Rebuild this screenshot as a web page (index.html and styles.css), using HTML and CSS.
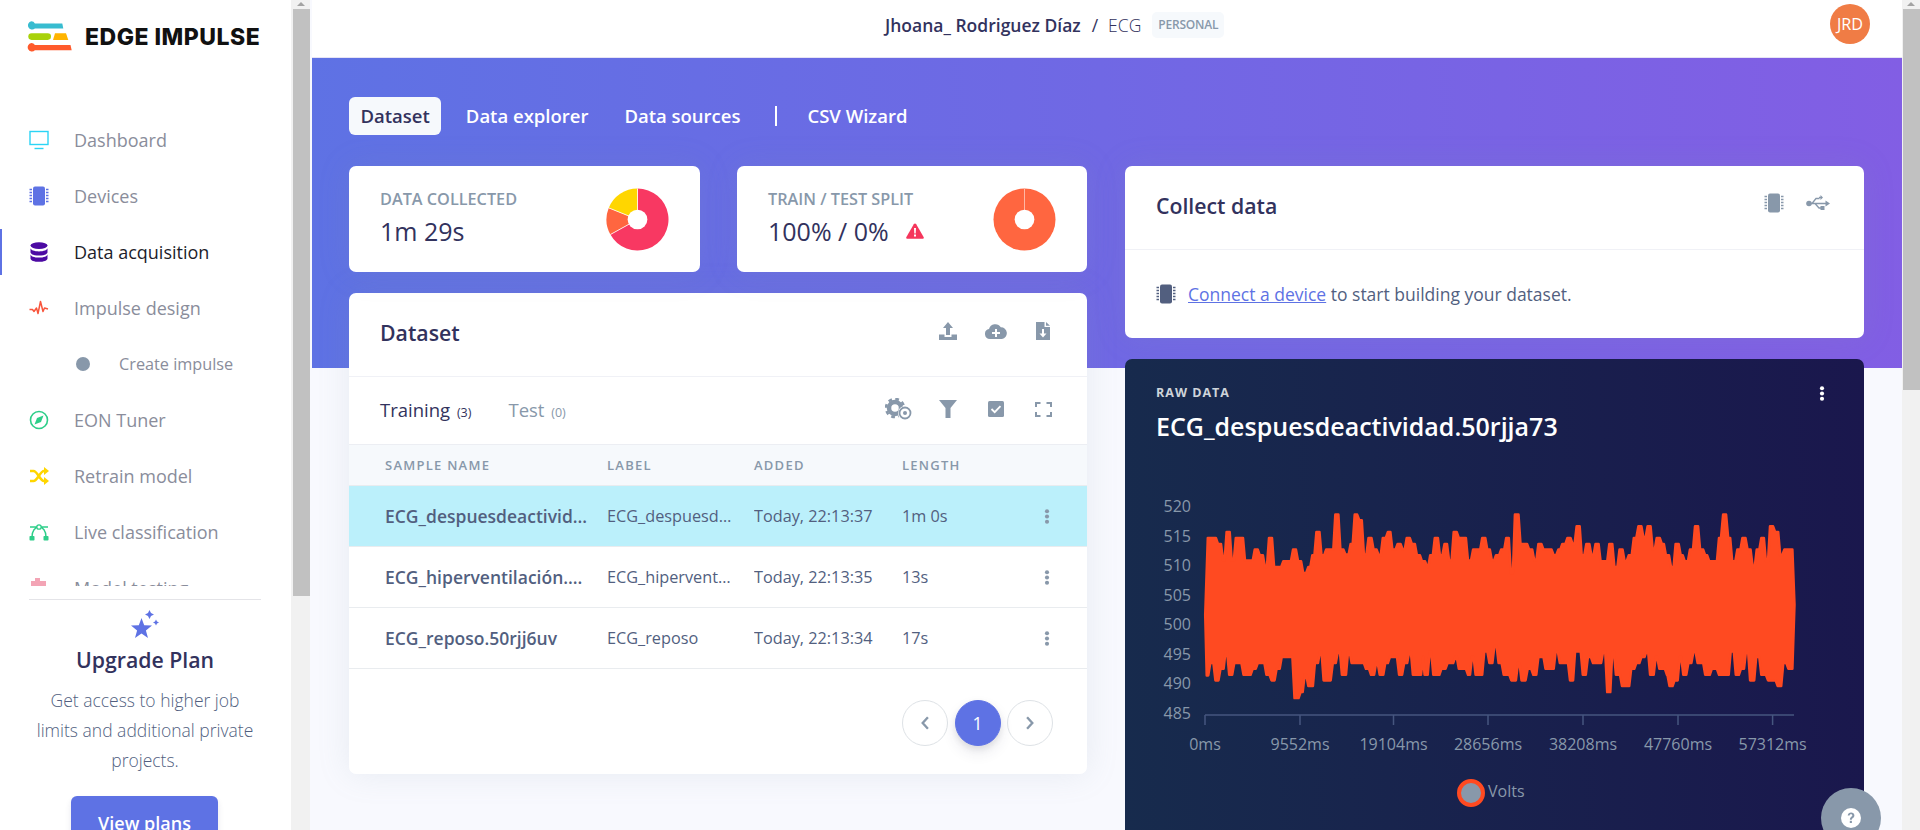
FILE: index.html
```html
<!DOCTYPE html>
<html lang="en">
<head>
    <meta charset="UTF-8">
    <title>ECG - Data acquisition - Edge Impulse</title>
    <link rel="stylesheet" href="styles.css">
</head>
<body>
    <svg class="sprite" xmlns="http://www.w3.org/2000/svg">
        <symbol id="chip" viewBox="0 0 20 20">
            <rect x="4" y="0.5" width="12" height="19" rx="2"/>
            <path d="M0.5 3.5h2.5M0.5 6.5h2.5M0.5 9.5h2.5M0.5 12.5h2.5M0.5 15.5h2.5M17 3.5h2.5M17 6.5h2.5M17 9.5h2.5M17 12.5h2.5M17 15.5h2.5" fill="none" stroke="currentColor" stroke-width="1.3"/>
        </symbol>
        <symbol id="kebab" viewBox="0 0 6 16">
            <circle cx="3" cy="2.4" r="2.2"/>
            <circle cx="3" cy="8" r="2.2"/>
            <circle cx="3" cy="13.6" r="2.2"/>
        </symbol>
    </svg>

    <aside class="sidebar">
        <div class="brand">
            <svg class="brand-mark" viewBox="0 0 45 31">
                <path d="M4.3 0.2a4.2 4.2 0 0 1 3.6 2.3h27.4l1 5H7.9a4.2 4.2 0 1 1-3.6-7.3z" fill="#38bcd0"/>
                <rect x="1.3" y="12.3" width="22.7" height="6.6" rx="3.3" fill="#a8d20a"/>
                <path d="M28 12.3h11l2.3 6.6H26z" fill="#ffb400"/>
                <path d="M4.3 22.1a4.2 4.2 0 0 1 3.6 1.9h35.6l1.2 5.2H7.9a4.2 4.2 0 1 1-3.6-7.1z" fill="#ff5a2c"/>
            </svg>
            <span class="brand-name">EDGE IMPULSE</span>
        </div>
        <nav class="nav">
            <a class="nav-item">
                <svg class="nav-icon c-cyan" viewBox="0 0 20 20"><rect x="1" y="1.5" width="18" height="13" fill="none" stroke="currentColor" stroke-width="1.4"/><path d="M5.5 18.5h9" stroke="currentColor" stroke-width="1.4"/></svg>
                Dashboard
            </a>
            <a class="nav-item">
                <svg class="nav-icon c-blue"><use href="#chip"/></svg>
                Devices
            </a>
            <a class="nav-item active">
                <svg class="nav-icon c-indigo" viewBox="0 0 20 20">
                    <ellipse cx="10" cy="3.6" rx="8.5" ry="3.3"/>
                    <path d="M1.5 6c0 2 3.8 3.4 8.5 3.4s8.500-1.400 8.500-3.400v4.200c0 2-3.800 3.400-8.500 3.400s-8.500-1.400-8.500-3.400z"/>
                    <path d="M1.500 12.200c0 2 3.800 3.400 8.500 3.400s8.500-1.400 8.500-3.400v4.200c0 2-3.800 3.400-8.500 3.400s-8.500-1.400-8.500-3.400z"/>
                </svg>
                Data acquisition
            </a>
            <a class="nav-item">
                <svg class="nav-icon c-red" viewBox="0 0 20 20"><path d="M0.500 11.500h3l1.500 2 2.500-3.500 1.500 5.500 2.500-12 2.500 10 1.500-3.500 3.500 1" fill="none" stroke="currentColor" stroke-width="1.500" stroke-linejoin="round"/></svg>
                Impulse design
            </a>
            <a class="nav-item nav-sub">
                <span class="nav-dot"></span>
                Create impulse
            </a>
            <a class="nav-item">
                <svg class="nav-icon c-green" viewBox="0 0 20 20"><circle cx="10" cy="10" r="8.500" fill="none" stroke="currentColor" stroke-width="1.600"/><path d="M14.500 5.500l-2.500 6.500-6.500 2.500 2.500-6.500z"/></svg>
                EON Tuner
            </a>
            <a class="nav-item">
                <svg class="nav-icon c-yellow" viewBox="0 0 20 20"><path d="M1 5h3.500c4 0 6.500 10 10.500 10h1M1 15h3.500c4 0 6.500-10 10.500-10h1" fill="none" stroke="currentColor" stroke-width="2.600"/><path d="M15 1l5 4-5 4zM15 11l5 4-5 4z"/></svg>
                Retrain model
            </a>
            <a class="nav-item">
                <svg class="nav-icon c-green" viewBox="0 0 20 20"><path d="M3 15C3 9 6 5 10 5s7 4 7 10M1 5h18" fill="none" stroke="currentColor" stroke-width="1.400"/><circle cx="10" cy="5" r="2.200" fill="#fff" stroke="currentColor" stroke-width="1.300"/><rect x="0.500" y="14" width="5" height="4.500" rx="0.800"/><rect x="14.500" y="14" width="5" height="4.500" rx="0.800"/></svg>
                Live classification
            </a>
            <a class="nav-item">
                <svg class="nav-icon c-pink" viewBox="0 0 20 20"><path d="M6 3V0h5v3h6v14H2V3z"/></svg>
                Model testing
            </a>
        </nav>
        <section class="upgrade">
            <svg class="upgrade-star" viewBox="0 0 30 30">
                <polygon points="11.500,8 14.200,15.300 22,15.600 15.900,20.400 18,28 11.500,23.600 5,28 7.100,20.400 1,15.600 8.800,15.300"/>
                <path d="M19.500 0l1.500 3 3 1.500-3 1.500-1.500 3-1.500-3-3-1.500 3-1.500zM26 9.500l1 2 2 1-2 1-1 2-1-2-2-1 2-1z"/>
            </svg>
            <h2 class="upgrade-title">Upgrade Plan</h2>
            <p class="upgrade-text">Get access to higher job limits and additional private projects.</p>
            <button class="upgrade-btn">View plans</button>
        </section>
    </aside>
    <div class="scrollbar scrollbar-side"><span class="scroll-arrow"></span><span class="scroll-thumb thumb-side"></span></div>

    <main class="main">
        <header class="topbar">
            <span class="project-owner">Jhoana_ Rodriguez Díaz</span>
            <span class="project-sep">/</span>
            <span class="project-name">ECG</span>
            <span class="project-badge">PERSONAL</span>
            <span class="avatar">JRD</span>
        </header>

        <div class="page">
            <div class="tabs">
                <a class="tab active">Dataset</a>
                <a class="tab">Data explorer</a>
                <a class="tab">Data sources</a>
                <span class="tab-divider"></span>
                <a class="tab">CSV Wizard</a>
            </div>

            <div class="columns">
                <div class="column">
                    <div class="stats">
                        <div class="card stat">
                            <div>
                                <div class="stat-label">DATA COLLECTED</div>
                                <div class="stat-value">1m 29s</div>
                            </div>
                            <svg class="pie" viewBox="-32 -32 64 64">
                                <path d="M0 -31.500A31.500 31.500 0 1 1 -27.550 15.270L0 0z" fill="#f83862"/>
                                <path d="M-27.550 15.270A31.500 31.500 0 0 1 -29.200 -11.800L0 0z" fill="#ff6640"/>
                                <path d="M-29.200 -11.800A31.500 31.500 0 0 1 0 -31.500L0 0z" fill="#ffd600"/>
                                <path d="M0 -31.500V0L-27.550 15.270M0 0L-29.200 -11.800" fill="none" stroke="#fff" stroke-width="0.800"/>
                                <circle r="10" fill="#fff"/>
                            </svg>
                        </div>
                        <div class="card stat">
                            <div>
                                <div class="stat-label">TRAIN / TEST SPLIT</div>
                                <div class="stat-value">100% / 0%
                                    <svg class="warn" viewBox="0 0 18 16"><path d="M9 0.500c0.500 0 0.900 0.300 1.200 0.700l7.400 12.800c0.500 0.900-0.100 1.700-1.100 1.700H1.500c-1 0-1.600-0.800-1.100-1.700L7.800 1.200C8.100 0.800 8.500 0.500 9 0.500z" fill="#f5365c"/><path d="M8 5h2l-0.300 5.500H8.300zM8 11.600h2v2H8z" fill="#fff"/></svg>
                                </div>
                            </div>
                            <svg class="pie" viewBox="-32 -32 64 64">
                                <circle r="31.500" fill="#ff6640"/>
                                <path d="M0 -31.500V0" stroke="#ffb9a6" stroke-width="1"/>
                                <circle r="10" fill="#fff"/>
                            </svg>
                        </div>
                    </div>

                    <div class="card dataset">
                        <div class="card-head">
                            <h3 class="card-title">Dataset</h3>
                            <div class="head-icons">
                                <svg class="icon i-upload" viewBox="0 0 18 18"><path d="M9 0l5 6h-3v7H7V6H4zM0 12.500h5.500V15h7v-2.500H18V18H0z"/></svg>
                                <svg class="icon i-cloud" viewBox="0 0 22 16"><path d="M5 16a5 5 0 0 1-1-9.900A6.500 6.500 0 0 1 15.800 4.300 5.900 5.900 0 0 1 17 16z"/><path d="M10 6h2v3h3v2h-3v3h-2v-3H7V9h3z" fill="#fff"/></svg>
                                <svg class="icon i-file" viewBox="0 0 14 18"><path d="M0 0h8.500v5H14v13H0zM10 0l4 3.700H10z"/><path d="M6 7h2v4.500h2.500L7 15.500 3.500 11.500H6z" fill="#fff"/></svg>
                            </div>
                        </div>
                        <div class="dataset-tabs">
                            <a class="set-tab active">Training <small>(3)</small></a>
                            <a class="set-tab">Test <small>(0)</small></a>
                            <div class="set-icons">
                                <svg class="icon i-gear" viewBox="0 0 29 22">
                                    <circle cx="10" cy="10" r="6" fill="none" stroke="#8898aa" stroke-width="4.500"/>
                                    <circle cx="10" cy="10" r="9" fill="none" stroke="#8898aa" stroke-width="2.600" stroke-dasharray="3.700 3.370"/>
                                    <circle cx="20" cy="15" r="7" fill="#fff"/>
                                    <circle cx="20" cy="15" r="5.500" fill="none" stroke="#8898aa" stroke-width="1.800"/>
                                    <circle cx="20" cy="15" r="2"/>
                                </svg>
                                <svg class="icon i-filter" viewBox="0 0 18 18"><path d="M0 0h18l-6.500 8v10H6.500V8z"/></svg>
                                <svg class="icon i-check" viewBox="0 0 16 16"><rect width="16" height="16" rx="1.500"/><path d="M3.500 8l3.200 3.200 5.800-6" fill="none" stroke="#fff" stroke-width="1.800"/></svg>
                                <svg class="icon i-full" viewBox="0 0 17 15"><path d="M1 5V1h4.500M11.500 1H16v4M16 10v4h-4.500M5.500 14H1v-4" fill="none" stroke="#8898aa" stroke-width="2"/></svg>
                            </div>
                        </div>
                        <table class="samples">
                            <colgroup>
                                <col class="col-name"><col class="col-label"><col class="col-added"><col class="col-length"><col>
                            </colgroup>
                            <thead>
                                <tr><th>SAMPLE NAME</th><th>LABEL</th><th>ADDED</th><th>LENGTH</th><th></th></tr>
                            </thead>
                            <tbody>
                                <tr class="selected">
                                    <td class="name">ECG_despuesdeactividad.50rjja73</td>
                                    <td>ECG_despuesdeactividad</td>
                                    <td>Today, 22:13:37</td>
                                    <td>1m 0s</td>
                                    <td><svg class="kebab"><use href="#kebab"/></svg></td>
                                </tr>
                                <tr>
                                    <td class="name">ECG_hiperventilación.50rjj9ab</td>
                                    <td>ECG_hiperventilación</td>
                                    <td>Today, 22:13:35</td>
                                    <td>13s</td>
                                    <td><svg class="kebab"><use href="#kebab"/></svg></td>
                                </tr>
                                <tr>
                                    <td class="name">ECG_reposo.50rjj6uv</td>
                                    <td>ECG_reposo</td>
                                    <td>Today, 22:13:34</td>
                                    <td>17s</td>
                                    <td><svg class="kebab"><use href="#kebab"/></svg></td>
                                </tr>
                            </tbody>
                        </table>
                        <div class="pager">
                            <a class="page-btn"><svg viewBox="0 0 8 12"><path d="M6.500 1L2 6l4.500 5" fill="none" stroke="currentColor" stroke-width="2"/></svg></a>
                            <a class="page-btn current">1</a>
                            <a class="page-btn"><svg viewBox="0 0 8 12"><path d="M1.500 1L6 6l-4.500 5" fill="none" stroke="currentColor" stroke-width="2"/></svg></a>
                        </div>
                    </div>
                </div>

                <div class="column">
                    <div class="card collect">
                        <div class="card-head">
                            <h3 class="card-title">Collect data</h3>
                            <div class="head-icons collect-icons">
                                <svg class="icon i-chip"><use href="#chip"/></svg>
                                <svg class="icon i-usb" viewBox="0 0 24 16">
                                    <circle cx="3" cy="8.500" r="2.800"/>
                                    <path d="M3 8.500h17M6 8.500l4-5h3.500M9 8.500l4 4.500h2.500" fill="none" stroke="#8898aa" stroke-width="1.300"/>
                                    <path d="M19.500 5.500l4.500 3-4.500 3zM13 1.800h1.500V0l2.500 2.500-2.500 2.500V3.300H13z"/>
                                    <rect x="14.500" y="11" width="4" height="4"/>
                                </svg>
                            </div>
                        </div>
                        <p class="collect-body">
                            <svg class="icon i-chip dark"><use href="#chip"/></svg>
                            <span><a class="link">Connect a device</a> to start building your dataset.</span>
                        </p>
                    </div>

                    <div class="raw">
                        <div class="raw-head">
                            <div>
                                <div class="raw-label">RAW DATA</div>
                                <div class="raw-title">ECG_despuesdeactividad.50rjja73</div>
                            </div>
                            <svg class="raw-menu"><use href="#kebab"/></svg>
                        </div>
                        <svg class="chart" id="chart" viewBox="0 0 739 400">
                            <g class="chart-y">
                                <text x="66" y="18">520</text>
                                <text x="66" y="47.500">515</text>
                                <text x="66" y="77">510</text>
                                <text x="66" y="106.500">505</text>
                                <text x="66" y="136">500</text>
                                <text x="66" y="165.500">495</text>
                                <text x="66" y="195">490</text>
                                <text x="66" y="224.500">485</text>
                            </g>
                            <path id="series" class="chart-series" d=""/>
                            <path class="chart-axis" d="M80 225H669M80 225v10M175 225v10M268.500 225v10M363 225v10M458 225v10M553 225v10M647.600 225v10"/>
                            <g class="chart-x">
                                <text x="80" y="256">0ms</text>
                                <text x="175" y="256">9552ms</text>
                                <text x="268.500" y="256">19104ms</text>
                                <text x="363" y="256">28656ms</text>
                                <text x="458" y="256">38208ms</text>
                                <text x="553" y="256">47760ms</text>
                                <text x="647.600" y="256">57312ms</text>
                            </g>
                            <circle class="legend-dot" cx="346" cy="303" r="12"/>
                            <text class="legend-text" x="363" y="303">Volts</text>
                        </svg>
                    </div>
                </div>
            </div>
        </div>
        <a class="help">
            <svg viewBox="0 0 20 20"><circle cx="10" cy="10" r="10" fill="#fff"/><path d="M6.700 7.500C6.900 5.600 8.300 4.600 10.100 4.600c1.900 0 3.300 1.100 3.300 2.800 0 2.500-2.600 2.500-2.600 4.300H8.900c0-2.900 2.400-3 2.400-4.200 0-0.700-0.500-1.200-1.300-1.200-0.800 0-1.300 0.500-1.400 1.200z" fill="#8898aa"/><rect x="8.800" y="12.800" width="2.100" height="2.200" fill="#8898aa"/></svg>
        </a>
    </main>
    <div class="scrollbar"><span class="scroll-arrow"></span><span class="scroll-thumb thumb-main"></span></div>

    <script src="chart.js"></script>
</body>
</html>
```

FILE: styles.css
```css
* {
    box-sizing: border-box;
}
html, body {
    height: 830px;
    overflow: hidden;
}
body {
    margin: 0;
    display: flex;
    font-family: "Open Sans", sans-serif;
    color: #525f7f;
    background-color: #f8f9fe;
}
a {
    text-decoration: none;
}
.sprite {
    display: none;
}

/* sidebar */
.sidebar {
    width: 291px;
    height: 830px;
    flex: none;
    overflow: hidden;
    background-color: #fff;
}
.brand {
    height: 112px;
    padding: 21px 0 0 27px;
    display: flex;
    align-items: flex-start;
    gap: 13px;
}
.brand-mark {
    width: 45px;
    height: 31px;
}
.brand-name {
    font-family: Inter, sans-serif;
    font-weight: 800;
    font-size: 23px;
    line-height: 32px;
    letter-spacing: .5px;
    color: #111;
    white-space: nowrap;
}
.nav {
    height: 474px;
    overflow: hidden;
}
.nav-item {
    height: 56px;
    padding-left: 29px;
    display: flex;
    align-items: center;
    font-size: 18px;
    color: #8a8d9b;
    position: relative;
}
.nav-item.active {
    color: #1d1d2b;
}
.nav-item.active::before {
    content: "";
    position: absolute;
    left: 0;
    top: 5px;
    width: 2px;
    height: 46px;
    background-color: #5e72e4;
}
.nav-icon {
    width: 20px;
    height: 20px;
    margin-right: 25px;
    flex: none;
    fill: currentColor;
}
.nav-sub {
    padding-left: 76px;
    font-size: 16.250px;
}
.nav-dot {
    width: 14px;
    height: 14px;
    margin-right: 29px;
    border-radius: 50%;
    background-color: #8898aa;
}
.c-cyan { color: #2bd4f5; }
.c-blue { color: #5e72e4; }
.c-indigo { color: #4c0aa3; }
.c-red { color: #f8553c; }
.c-green { color: #2dce89; }
.c-yellow { color: #ffd600; }
.c-pink { color: #f3a4b5; }

.upgrade {
    margin: 13px 30px 0 29px;
    padding-top: 10px;
    border-top: 1px solid #e4e4e8;
    text-align: center;
}
.upgrade-star {
    display: block;
    width: 30px;
    height: 30px;
    margin: 0 auto;
    fill: #5e72e4;
}
.upgrade-title {
    margin: 3px 0 0;
    font-size: 21.250px;
    line-height: 34px;
    font-weight: 600;
    color: #32325d;
}
.upgrade-text {
    margin: 8px 0 0;
    font-size: 17.500px;
    font-weight: 300;
    line-height: 30px;
    color: #525f7f;
}
.upgrade-btn {
    display: block;
    width: 147px;
    height: 54px;
    margin: 21px 0 0 42px;
    border: none;
    border-radius: 6px;
    font-family: inherit;
    font-size: 18px;
    font-weight: 600;
    color: #fff;
    background-color: #5e72e4;
    box-shadow: 0 4px 6px rgba(50, 50, 93, .11);
}

/* fake window scrollbars */
.scrollbar {
    width: 18px;
    height: 830px;
    flex: none;
    background-color: #f1f1f1;
    position: relative;
}
.scrollbar-side {
    width: 19px;
}
.scroll-arrow {
    display: block;
    width: 0;
    margin: 2px auto 0;
    border: 4px solid transparent;
    border-top: 0;
    border-bottom-color: #a3a3a3;
}
.scroll-thumb {
    position: absolute;
    top: 9px;
    left: 1px;
    right: 0;
    background-color: #c1c1c1;
}
.thumb-side {
    left: 2px;
    height: 587px;
}
.thumb-main {
    height: 381px;
}

/* main area */
.main {
    flex: 1;
    min-width: 0;
    height: 830px;
    margin-left: 2px;
    overflow: hidden;
    position: relative;
}
.topbar {
    height: 58px;
    padding: 0 0 8px 573px;
    display: flex;
    align-items: center;
    background-color: #fff;
    border-bottom: 1px solid #e6e4f5;
    font-size: 17.500px;
}
.project-owner {
    font-weight: 600;
    color: #32325d;
}
.project-sep {
    margin: 0 10px 0 11px;
    color: #32325d;
}
.project-name {
    font-weight: 300;
    color: #32325d;
}
.project-badge {
    margin-left: 11px;
    padding: 0 6px;
    line-height: 26px;
    font-size: 12px;
    font-weight: 600;
    letter-spacing: -.2px;
    border-radius: 5px;
    color: #8898aa;
    background-color: #f6f9fc;
}
.avatar {
    width: 40px;
    height: 40px;
    position: absolute;
    top: 4px;
    right: 32px;
    border-radius: 50%;
    text-align: center;
    line-height: 40px;
    font-size: 16.250px;
    color: #fff;
    background-color: #f07c45;
}
.page {
    padding: 39px 38px 0 37px;
    background: linear-gradient(87deg, #5e72e4 0, #825ee4 100%) top / 100% 310px no-repeat;
}
.tabs {
    display: flex;
    align-items: center;
    gap: 13px;
    height: 38px;
    margin-bottom: 31px;
}
.tab {
    padding: 0 11.500px;
    line-height: 38px;
    font-size: 18.500px;
    font-weight: 600;
    border-radius: 6px;
    color: #fff;
}
.tab.active {
    color: #32325d;
    background-color: #f6f9fc;
}
.tab-divider {
    width: 2px;
    height: 20px;
    margin: 0 6px 0 10px;
    background-color: #fff;
}
.columns {
    display: grid;
    grid-template-columns: 738px 739px;
    gap: 38px;
    align-items: start;
}
.card {
    border-radius: 7px;
    background-color: #fff;
    box-shadow: 0 0 2rem 0 rgba(136, 152, 170, .15);
}
.stats {
    display: grid;
    grid-template-columns: 351px 350px;
    gap: 37px;
    margin-bottom: 21px;
}
.stat {
    height: 106px;
    padding: 0 31px 2px 31px;
    display: flex;
    justify-content: space-between;
    align-items: center;
}
.stat-label {
    font-size: 16.250px;
    font-weight: 600;
    line-height: 22px;
    color: #8898aa;
}
.stat-value {
    margin-top: 4px;
    font-size: 25px;
    line-height: 34px;
    color: #32325d;
    display: flex;
    align-items: center;
    gap: 17px;
}
.pie {
    width: 63px;
    height: 63px;
    margin-top: 3px;
    flex: none;
}
.warn {
    width: 18px;
    height: 16px;
}
.card-head {
    height: 84px;
    padding: 0 32px 5px 31px;
    display: flex;
    justify-content: space-between;
    align-items: center;
    border-bottom: 1px solid #f0f1f6;
}
.card-title {
    margin: 0;
    font-size: 21.250px;
    font-weight: 600;
    color: #32325d;
}
.icon {
    display: block;
    fill: #8898aa;
}
.head-icons {
    display: flex;
    align-items: center;
    margin-bottom: 2px;
}
.i-upload { width: 18px; height: 18px; margin-right: 28px; }
.i-cloud { width: 22px; height: 16px; margin-right: 29px; }
.i-file { width: 14px; height: 18px; margin-right: 5px; }

.dataset-tabs {
    height: 68px;
    padding: 0 35px 2px 31px;
    display: flex;
    align-items: center;
    border-bottom: 1px solid #eceef3;
}
.set-tab {
    margin-right: 37px;
    font-size: 18.500px;
    color: #8898aa;
}
.set-tab.active {
    color: #32325d;
}
.set-tab small {
    margin-left: 2px;
    font-size: 12.500px;
}
.set-icons {
    margin-left: auto;
    display: flex;
    align-items: center;
    margin-bottom: 1px;
}
.i-gear { width: 29px; height: 22px; margin-right: 25px; }
.i-filter { width: 18px; height: 18px; margin-right: 31px; }
.i-check { width: 16px; height: 16px; margin-right: 31px; }
.i-full { width: 17px; height: 15px; }

.samples {
    width: 100%;
    table-layout: fixed;
    border-collapse: separate;
    border-spacing: 0;
}
.col-name { width: 258px; }
.col-label { width: 147px; }
.col-added { width: 148px; }
.col-length { width: 130px; }
.samples th {
    height: 41px;
    padding: 0;
    text-align: left;
    font-size: 13px;
    font-weight: 600;
    letter-spacing: 1.250px;
    color: #8898aa;
    background-color: #f6f9fc;
    border-bottom: 1px solid #e9ecef;
}
.samples td {
    height: 61px;
    padding: 0 22px 0 0;
    font-size: 16.250px;
    white-space: nowrap;
    overflow: hidden;
    text-overflow: ellipsis;
    border-bottom: 1px solid #e9ecef;
}
.samples th:first-child,
.samples td:first-child {
    padding-left: 36px;
}
.samples td.name {
    padding-right: 17px;
    font-size: 17.500px;
    font-weight: 600;
}
.samples tr.selected td {
    background-color: #bbf0fb;
}
.samples td:last-child {
    padding: 0 0 0 12px;
}
.kebab {
    display: block;
    width: 6px;
    height: 15px;
    fill: #8898aa;
}
.pager {
    padding: 31px 34px 28px;
    display: flex;
    justify-content: flex-end;
    gap: 6.500px;
}
.page-btn {
    width: 46px;
    height: 46px;
    display: flex;
    align-items: center;
    justify-content: center;
    border: 1px solid #dee2e6;
    border-radius: 50%;
    color: #8898aa;
    font-size: 17.500px;
}
.page-btn svg {
    width: 10px;
    height: 14px;
}
.page-btn.current {
    color: #fff;
    font-weight: 400;
    border-color: #5e72e4;
    background-color: #5e72e4;
    box-shadow: 0 7px 14px rgba(50, 50, 93, .1), 0 3px 6px rgba(0, 0, 0, .08);
}

.collect {
    height: 172px;
    margin-bottom: 21px;
}
.collect-icons {
    margin-bottom: 4px;
}
.i-chip { width: 20px; height: 20px; margin-right: 22px; color: #8898aa; }
.i-usb { width: 24px; height: 16px; margin-right: 2px; }
.collect-body {
    margin: 32px 0 0 31px;
    display: flex;
    align-items: center;
    font-size: 17.500px;
    font-weight: 400;
}
.i-chip.dark {
    margin-right: 12px;
    color: #525f7f;
    fill: #525f7f;
}
.link {
    color: #5e72e4;
    text-decoration: underline;
}
.raw {
    height: 520px;
    border-radius: 7px;
    background: linear-gradient(87deg, #172b4d 0, #1a174d 100%);
}
.raw-head {
    height: 131px;
    padding: 24px 39px 0 31px;
    display: flex;
    justify-content: space-between;
    align-items: flex-start;
}
.raw-label {
    font-size: 12.500px;
    font-weight: 700;
    line-height: 20px;
    letter-spacing: 1px;
    color: #ced4da;
}
.raw-title {
    margin-top: 6px;
    font-size: 25px;
    font-weight: 600;
    line-height: 34px;
    color: #fff;
}
.raw-menu {
    width: 6px;
    height: 15px;
    margin-top: 3px;
    fill: #fff;
}
.chart {
    display: block;
    width: 739px;
    height: 400px;
}
.chart text {
    font-size: 16px;
    font-weight: 400;
    fill: #8898aa;
    dominant-baseline: middle;
}
.chart-y text {
    text-anchor: end;
}
.chart-x text {
    text-anchor: middle;
}
.chart-series {
    fill: #ff4a21;
    stroke: #ff4a21;
    stroke-width: 2.500;
    stroke-linejoin: round;
}
.chart-axis {
    fill: none;
    stroke: #46567f;
    stroke-width: 1.500;
}
.legend-dot {
    fill: #8898aa;
    stroke: #ff4a21;
    stroke-width: 4;
}
.help {
    position: absolute;
    top: 788px;
    right: 21px;
    width: 60px;
    height: 60px;
    border-radius: 50%;
    background-color: #8898aa;
    padding: 20px;
}
.help svg {
    display: block;
    width: 20px;
    height: 20px;
}
```

FILE: chart.js
```js
// min/max envelope of the signal: [x, y] pairs, each level holds until the next x.
// x and y are in trace units, scaled down to chart units below.
const upper = [[170,200],[190,218],[200,268],[207,182],[217,268],[225,200],[243,268],[262,235],[272,252],[282,287],[290,200],[300,287],[318,270],[337,235],[347,270],[357,305],[367,287],[375,252],[383,182],[393,252],[402,235],[420,130],[430,235],[440,250],[450,218],[458,130],[467,147],[476,250],[485,200],[495,235],[505,252],[513,200],[523,182],[532,235],[542,218],[552,235],[560,200],[570,218],[580,252],[590,270],[600,287],[606,252],[615,200],[625,252],[634,218],[643,268],[652,182],[662,200],[680,268],[690,235],[708,200],[718,235],[727,268],[735,252],[745,235],[755,200],[764,305],[772,130],[783,218],[800,235],[810,268],[818,218],[828,235],[848,252],[857,235],[865,218],[875,200],[885,218],[893,165],[903,252],[912,218],[922,252],[930,218],[940,270],[957,218],[967,287],[977,235],[987,270],[995,252],[1005,200],[1014,165],[1024,200],[1032,165],[1042,235],[1050,200],[1060,218],[1068,252],[1078,287],[1087,218],[1097,252],[1105,270],[1115,235],[1125,165],[1135,235],[1145,252],[1153,270],[1172,200],[1180,130],[1190,200],[1198,270],[1208,235],[1218,200],[1228,235],[1238,287],[1246,235],[1255,200],[1264,270],[1272,165],[1282,182],[1292,252],[1300,235],[1320,400]];

const lower = [[168,620],[175,583],[185,635],[195,600],[205,548],[212,618],[222,583],[240,618],[258,600],[268,583],[285,618],[295,635],[305,600],[315,565],[340,688],[352,670],[360,618],[367,652],[380,583],[390,548],[397,635],[415,583],[425,548],[433,618],[445,548],[452,583],[480,600],[490,618],[500,583],[507,618],[518,583],[527,565],[545,618],[555,583],[565,548],[572,618],[592,565],[595,618],[605,548],[612,618],[628,600],[640,583],[655,565],[662,600],[680,618],[688,565],[695,618],[712,548],[722,583],[732,530],[740,583],[750,618],[765,635],[778,583],[785,635],[797,600],[808,618],[818,565],[832,600],[852,548],[860,583],[880,635],[890,548],[905,618],[915,565],[925,583],[945,548],[953,670],[963,548],[970,618],[982,652],[1000,600],[1010,583],[1020,565],[1030,548],[1037,618],[1048,565],[1055,600],[1070,618],[1075,652],[1085,635],[1095,565],[1102,618],[1112,583],[1122,548],[1130,583],[1145,618],[1158,600],[1172,618],[1195,548],[1205,618],[1215,600],[1225,548],[1233,635],[1245,565],[1255,618],[1268,635],[1287,652],[1298,583],[1308,600],[1316,600]];

const toX = x => (x / 1.96 - 5).toFixed(1);
const toY = y => (y / 3 - 20).toFixed(1);

function stepPoints(levels, inset) {
    const points = [];
    levels.forEach(([x, y], i) => {
        const next = levels[i + 1] ? levels[i + 1][0] : x;
        const level = y + inset * 3;
        points.push(toX(x + 2) + ' ' + toY(level));
        points.push(toX(Math.max(x + 2, next - 2)) + ' ' + toY(level));
    });
    return points;
}

const upperPoints = stepPoints(upper, 1.25);
const lowerPoints = stepPoints(lower, -1.25).reverse();

document.getElementById('series').setAttribute('d',
    'M' + toX(167) + ' ' + toY(435) + ' L' + upperPoints.concat(lowerPoints).join(' L') + ' Z');
```
